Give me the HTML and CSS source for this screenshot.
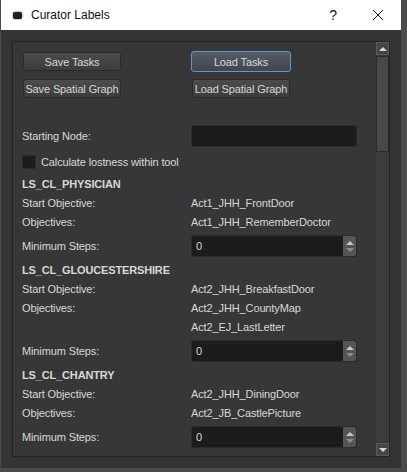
FILE: index.html
```html
<!DOCTYPE html>
<html lang="en">

<head>
    <meta charset="UTF-8">
    <meta name="viewport" content="width=device-width, initial-scale=1.0">
    <title>Curator Labels</title>
    <link rel="stylesheet" href="styles.css">
</head>

<body>
    <div class="window">
        <div class="titlebar">
            <span class="app-icon"></span>
            <span class="title">Curator Labels</span>
            <span class="help">?</span>
            <svg class="close" width="12" height="12" viewBox="0 0 12 12">
                <path d="M1 1 L11 11 M11 1 L1 11" stroke="#111" stroke-width="1" fill="none" />
            </svg>
        </div>

        <div class="client">
            <div class="scroll-area">
                <div class="content">
                    <div class="button-row first">
                        <button class="btn btn-left">Save Tasks</button>
                        <button class="btn btn-right focused">Load Tasks</button>
                    </div>
                    <div class="button-row second">
                        <button class="btn btn-left">Save Spatial Graph</button>
                        <button class="btn btn-right">Load Spatial Graph</button>
                    </div>

                    <div class="row node-row">
                        <span class="label">Starting Node:</span>
                        <div class="text-input"></div>
                    </div>

                    <div class="check-row">
                        <span class="checkbox"></span>
                        <span>Calculate lostness within tool</span>
                    </div>

                    <div class="heading">LS_CL_PHYSICIAN</div>
                    <div class="row"><span class="label">Start Objective:</span><span>Act1_JHH_FrontDoor</span></div>
                    <div class="row"><span class="label">Objectives:</span><span>Act1_JHH_RememberDoctor</span></div>
                    <div class="row steps-row">
                        <span class="label">Minimum Steps:</span>
                        <div class="spin"><span class="spin-value">0</span><span class="spin-btns"><i class="up"></i><i class="down"></i></span></div>
                    </div>

                    <div class="heading">LS_CL_GLOUCESTERSHIRE</div>
                    <div class="row"><span class="label">Start Objective:</span><span>Act2_JHH_BreakfastDoor</span></div>
                    <div class="row"><span class="label">Objectives:</span><span>Act2_JHH_CountyMap</span></div>
                    <div class="row"><span class="label"></span><span>Act2_EJ_LastLetter</span></div>
                    <div class="row steps-row">
                        <span class="label">Minimum Steps:</span>
                        <div class="spin"><span class="spin-value">0</span><span class="spin-btns"><i class="up"></i><i class="down"></i></span></div>
                    </div>

                    <div class="heading">LS_CL_CHANTRY</div>
                    <div class="row"><span class="label">Start Objective:</span><span>Act2_JHH_DiningDoor</span></div>
                    <div class="row"><span class="label">Objectives:</span><span>Act2_JB_CastlePicture</span></div>
                    <div class="row steps-row">
                        <span class="label">Minimum Steps:</span>
                        <div class="spin"><span class="spin-value">0</span><span class="spin-btns"><i class="up"></i><i class="down"></i></span></div>
                    </div>
                </div>

                <div class="scrollbar">
                    <div class="sb-btn"><i class="up"></i></div>
                    <div class="sb-track"><div class="sb-thumb"></div></div>
                    <div class="sb-btn"><i class="down"></i></div>
                </div>
            </div>
        </div>
    </div>
</body>

</html>
```

FILE: styles.css
```css
body {
    margin: 0;
    height: 472px;
    overflow: hidden;
    background-color: #4b4b4b;
    font-family: "Liberation Sans", Arial, sans-serif;
    font-size: 11px;
    letter-spacing: -0.12px;
    color: #d8d8d8;
}

.window {
    width: 400px;
    height: 468px;
    margin-left: 1px;
    display: flex;
    flex-direction: column;
}

.titlebar {
    height: 30px;
    background-color: white;
    color: #111;
    display: flex;
    align-items: center;
    font-size: 12px;
    letter-spacing: 0;
    flex-shrink: 0;
}

.app-icon {
    width: 9px;
    height: 7px;
    margin-left: 12px;
    background-color: #1c2026;
    border-radius: 2px;
    box-shadow: 0 0 2px #445;
}

.title {
    margin-left: 9px;
    flex: 1;
}

.help {
    font-size: 14px;
    margin-right: 35px;
}

.close {
    margin-right: 17px;
}

.client {
    flex: 1;
    background-color: #343434;
    padding: 11px;
    min-height: 0;
}

.scroll-area {
    height: 100%;
    box-sizing: border-box;
    border: 1px solid #232323;
    display: flex;
    background-color: #373737;
}

.content {
    flex: 1;
    padding: 9px 0 0 9px;
    overflow: hidden;
}

.button-row {
    display: flex;
    align-items: center;
    height: 21px;
}

.button-row.second {
    margin-top: 6px;
}

.btn {
    height: 19px;
    padding: 0;
    font: inherit;
    letter-spacing: inherit;
    color: #d8d8d8;
    white-space: nowrap;
    border: 1px solid #2a2a2a;
    border-radius: 3px;
    background: linear-gradient(#4c4c4c, #3c3c3c);
}

.btn-left {
    width: 98px;
    margin-left: 1px;
}

.btn-right {
    width: 98px;
    margin-left: 71px;
}

.btn-right.focused {
    width: 100px;
    height: 21px;
    margin-left: 70px;
    border-color: #5e97d0;
    background: linear-gradient(#565c66, #404550);
}

.row {
    display: flex;
    align-items: center;
    height: 19px;
}

.label {
    width: 169px;
    flex-shrink: 0;
}

.node-row {
    height: 22px;
    margin-top: 26px;
}

.text-input {
    width: 166px;
    height: 22px;
    box-sizing: border-box;
    background-color: #1c1c1c;
    border: 1px solid #2b2b2b;
    border-radius: 2px;
}

.check-row {
    display: flex;
    align-items: center;
    gap: 5px;
    height: 14px;
    margin-top: 8px;
    margin-bottom: 6px;
}

.checkbox {
    width: 14px;
    height: 14px;
    box-sizing: border-box;
    background-color: #1c1c1c;
    border: 1px solid #2b2b2b;
}

.heading {
    font-weight: bold;
    letter-spacing: -0.15px;
    height: 18px;
    line-height: 19px;
    margin-top: 4px;
}

.steps-row {
    height: 22px;
    margin-top: 4px;
}

.spin {
    width: 166px;
    height: 22px;
    box-sizing: border-box;
    display: flex;
    background-color: #1c1c1c;
    border: 1px solid #2b2b2b;
    border-radius: 2px;
}

.spin-value {
    flex: 1;
    padding-left: 4px;
    line-height: 20px;
}

.spin-btns {
    width: 13px;
    background-color: #555;
    display: flex;
    flex-direction: column;
    align-items: center;
    justify-content: center;
    gap: 3px;
    border-radius: 0 2px 2px 0;
}

.up,
.down {
    display: block;
    width: 0;
    height: 0;
    border-left: 4px solid transparent;
    border-right: 4px solid transparent;
}

.up {
    border-bottom: 4px solid #c8c8c8;
}

.down {
    border-top: 4px solid #8e8e8e;
}

.scrollbar {
    width: 13px;
    flex-shrink: 0;
    display: flex;
    flex-direction: column;
    gap: 1px;
}

.sb-btn {
    height: 13px;
    box-sizing: border-box;
    border: 1px solid #5a5a5a;
    background-color: #444;
    display: flex;
    align-items: center;
    justify-content: center;
}

.sb-btn .down {
    border-top-color: #d8d8d8;
}

.sb-btn .up {
    border-bottom-color: #d8d8d8;
}

.sb-track {
    flex: 1;
    background-color: #3c3c3c;
}

.sb-thumb {
    height: 96px;
    box-sizing: border-box;
    background-color: #484848;
    border: 1px solid #2b2b2b;
}
```
